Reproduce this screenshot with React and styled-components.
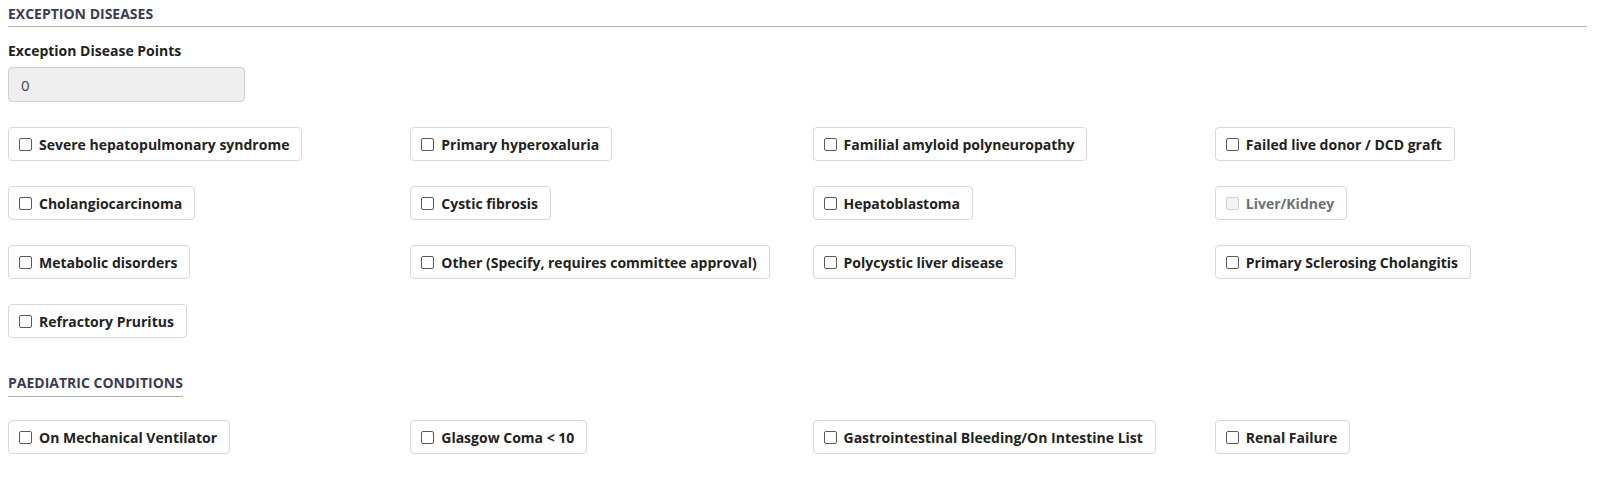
import React from "react";
import styled, { createGlobalStyle } from "styled-components";

const GlobalStyle = createGlobalStyle`
  body {
    margin: 0;
    background: #fff;
    font-family: "Open Sans", "Liberation Sans", sans-serif;
    color: #222;
  }
`;

const Page = styled.div`
  padding: 5px 11px 20px 8px;
`;

const SectionTitle = styled.h4`
  margin: ${(p) => (p.$spaced ? "36px" : "0")} 0 0;
  display: ${(p) => (p.$inline ? "inline-block" : "block")};
  padding-bottom: ${(p) => (p.$spaced ? "4px" : "3px")};
  border-bottom: 1px solid #aeb2b9;
  font-size: 14px;
  line-height: 18px;
  font-weight: 700;
  text-transform: uppercase;
  color: #3c3b54;
`;

const FieldLabel = styled.label`
  display: block;
  margin-top: 15px;
  font-size: 14px;
  line-height: 18px;
  font-weight: 700;
  color: #222;
`;

const PointsInput = styled.input`
  display: block;
  box-sizing: border-box;
  margin-top: 7px;
  width: 237px;
  height: 35px;
  padding: 0 12px;
  border: 1px solid #cfcfcf;
  border-radius: 4px;
  background: #efefef;
  font-family: inherit;
  font-size: 15px;
  color: #444;
`;

const OptionGrid = styled.div`
  display: grid;
  grid-template-columns: repeat(4, 1fr);
  column-gap: 30px;
  row-gap: 25px;
  margin-top: ${(p) => p.$top}px;
`;

const Option = styled.label`
  justify-self: start;
  display: inline-flex;
  align-items: center;
  gap: 7px;
  box-sizing: border-box;
  height: 34px;
  padding: 0 12px 0 10px;
  border: 1px solid #d8d8d8;
  border-radius: 4px;
  background: #fff;
  font-size: 14px;
  font-weight: 700;
  white-space: nowrap;
  color: ${(p) => (p.$disabled ? "#6c7078" : "#222")};
  cursor: ${(p) => (p.$disabled ? "default" : "pointer")};
`;

const Box = styled.input.attrs({ type: "checkbox" })`
  appearance: none;
  margin: 0;
  width: 13px;
  height: 13px;
  flex: none;
  border: 1px solid ${(p) => (p.disabled ? "#cfcfcf" : "#5a5a5a")};
  border-radius: 2px;
  background: ${(p) => (p.disabled ? "#f3f3f3" : "#fff")};
`;

const exceptions = [
  "Severe hepatopulmonary syndrome",
  "Primary hyperoxaluria",
  "Familial amyloid polyneuropathy",
  "Failed live donor / DCD graft",
  "Cholangiocarcinoma",
  "Cystic fibrosis",
  "Hepatoblastoma",
  { text: "Liver/Kidney", disabled: true },
  "Metabolic disorders",
  "Other (Specify, requires committee approval)",
  "Polycystic liver disease",
  "Primary Sclerosing Cholangitis",
  "Refractory Pruritus",
];

const paediatric = [
  "On Mechanical Ventilator",
  "Glasgow Coma < 10",
  "Gastrointestinal Bleeding/On Intestine List",
  "Renal Failure",
];

function Choice({ item }) {
  const text = typeof item === "string" ? item : item.text;
  const disabled = typeof item !== "string" && item.disabled;
  return (
    <Option $disabled={disabled}>
      <Box disabled={disabled} />
      {text}
    </Option>
  );
}

export default function App() {
  return (
    <>
      <GlobalStyle />
      <Page>
        <SectionTitle>Exception Diseases</SectionTitle>
        <FieldLabel>Exception Disease Points</FieldLabel>
        <PointsInput value="0" readOnly />
        <OptionGrid $top={25}>
          {exceptions.map((item, i) => (
            <Choice key={i} item={item} />
          ))}
        </OptionGrid>

        <SectionTitle $inline $spaced>
          Paediatric Conditions
        </SectionTitle>
        <OptionGrid $top={23}>
          {paediatric.map((item, i) => (
            <Choice key={i} item={item} />
          ))}
        </OptionGrid>
      </Page>
    </>
  );
}
